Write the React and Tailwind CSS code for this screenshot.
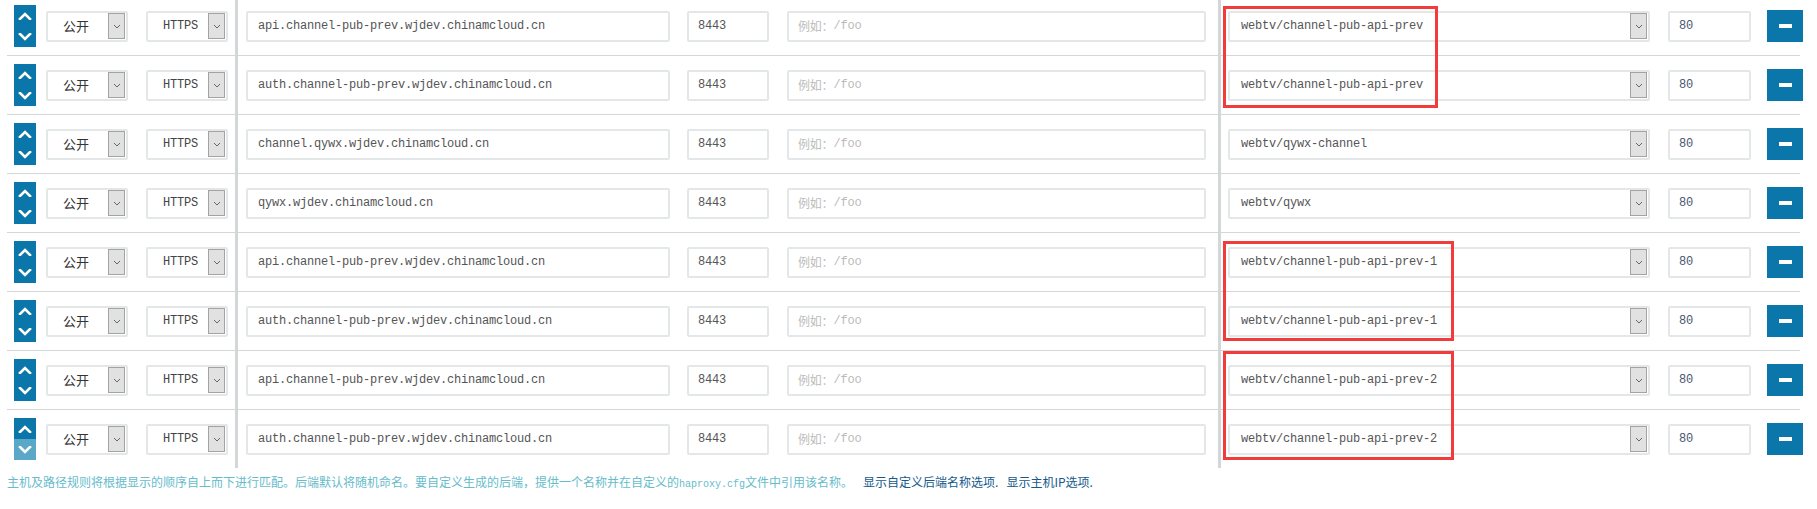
const rows = [
  { host: 'api.channel-pub-prev.wjdev.chinamcloud.cn', backend: 'webtv/channel-pub-api-prev' },
  { host: 'auth.channel-pub-prev.wjdev.chinamcloud.cn', backend: 'webtv/channel-pub-api-prev' },
  { host: 'channel.qywx.wjdev.chinamcloud.cn', backend: 'webtv/qywx-channel' },
  { host: 'qywx.wjdev.chinamcloud.cn', backend: 'webtv/qywx' },
  { host: 'api.channel-pub-prev.wjdev.chinamcloud.cn', backend: 'webtv/channel-pub-api-prev-1' },
  { host: 'auth.channel-pub-prev.wjdev.chinamcloud.cn', backend: 'webtv/channel-pub-api-prev-1' },
  { host: 'api.channel-pub-prev.wjdev.chinamcloud.cn', backend: 'webtv/channel-pub-api-prev-2' },
  { host: 'auth.channel-pub-prev.wjdev.chinamcloud.cn', backend: 'webtv/channel-pub-api-prev-2' },
]

const mono = "font-[family-name:'Liberation_Mono','Noto_Sans_CJK_SC',monospace] font-normal text-[12px] tracking-[-0.2px]"
const cjk = "font-[family-name:'Noto_Sans_CJK_SC',sans-serif] font-normal"

function Chevron({ up }) {
  return (
    <svg width="14" height="8" viewBox="0 0 14 8">
      <polyline
        points={up ? '2,7 7,2 12,7' : '2,1 7,6 12,1'}
        fill="none"
        stroke="white"
        strokeWidth="2.6"
        strokeLinecap="square"
      />
    </svg>
  )
}

function MoveButton({ last }) {
  return (
    <div className="w-[22px] h-[42px] flex flex-col shrink-0">
      <div className="flex-1 bg-[#0b76a9] flex items-center justify-center">
        <Chevron up />
      </div>
      <div className={`flex-1 flex items-center justify-center ${last ? 'bg-[#5ba7c8]' : 'bg-[#0b76a9]'}`}>
        <Chevron />
      </div>
    </div>
  )
}

function Box({ className = '', children }) {
  return (
    <div className={`h-[31px] shrink-0 border-2 border-[#e4e7e7] rounded-[2px] bg-white flex items-center whitespace-nowrap ${className}`}>
      {children}
    </div>
  )
}

function SelectBox({ className, textClass = '', children }) {
  return (
    <Box className={`pr-[1px] ${className}`}>
      <span className={`flex-1 min-w-0 ${textClass}`}>{children}</span>
      <span className="w-[17px] h-[26px] bg-[#e1e1e1] border border-[#a3a3a3] flex items-center justify-center">
        <svg width="8" height="5" viewBox="0 0 8 5">
          <polyline points="1,1 4,4 7,1" fill="none" stroke="#666" strokeWidth="1" />
        </svg>
      </span>
    </Box>
  )
}

function Divider() {
  return <div className="w-[3px] self-stretch bg-[#d3d7d7] shrink-0 -my-[8px]" />
}

function Row({ row, last }) {
  return (
    <div className={`flex items-center py-[8px] pl-[7px] ${last ? '' : 'border-b border-[#d3d7d7]'}`}>
      <MoveButton last={last} />
      <SelectBox className="ml-[10px] w-[82px]" textClass={`pl-[15px] text-[13px] text-[#333] ${cjk}`}>
        公开
      </SelectBox>
      <SelectBox className="ml-[18px] w-[82px]" textClass={`pl-[15px] text-[#444] ${mono}`}>
        HTTPS
      </SelectBox>
      <div className="ml-[7px] self-stretch flex">
        <Divider />
      </div>
      <Box className={`ml-[8px] w-[424px] pl-[10px] text-[#555] ${mono}`}>{row.host}</Box>
      <Box className={`ml-[17px] w-[82px] pl-[9px] text-[#555] ${mono}`}>8443</Box>
      <Box className={`ml-[18px] w-[419px] pl-[9px] text-[#bbbbbb] ${mono}`}>
        <span className={`${cjk} text-[12px]`}>例如：</span>/foo
      </Box>
      <div className="ml-[12px] self-stretch flex">
        <Divider />
      </div>
      <SelectBox className="ml-[7px] w-[422px]" textClass={`pl-[11px] text-[#555] ${mono}`}>
        {row.backend}
      </SelectBox>
      <Box className={`ml-[18px] w-[83px] pl-[9px] text-[#4a5670] ${mono}`}>80</Box>
      <div className="ml-[16px] w-[36px] h-[32px] bg-[#0b76a9] flex items-center justify-center shrink-0">
        <div className="w-[13px] h-[4px] bg-white" />
      </div>
    </div>
  )
}

function Mark({ className }) {
  return <div className={`absolute border-[3px] border-[#f23c3c] pointer-events-none ${className}`} />
}

export default function App() {
  return (
    <div className="relative w-[1817px] h-[509px] overflow-hidden bg-white">
      <div className="ml-[7px] w-[1793px] -mt-[3px]">
        {rows.map((row, i) => (
          <Row key={i} row={row} last={i === rows.length - 1} />
        ))}
      </div>

      <p className={`mt-[6px] ml-[7px] text-[12px] leading-[16px] whitespace-nowrap text-[#66bccb] ${cjk}`}>
        主机及路径规则将根据显示的顺序自上而下进行匹配。后端默认将随机命名。要自定义生成的后端，提供一个名称并在自定义的
        <span className="font-[family-name:'Liberation_Mono',monospace] text-[10px]">haproxy.cfg</span>
        文件中引用该名称。
        <a className="ml-[10px] text-[#14598a]">显示自定义后端名称选项.</a>
        <a className="ml-[8px] text-[#14598a]">显示主机IP选项.</a>
      </p>

      <Mark className="left-[1223px] top-[6px] w-[215px] h-[102px]" />
      <Mark className="left-[1223px] top-[241px] w-[231px] h-[100px]" />
      <Mark className="left-[1223px] top-[351px] w-[231px] h-[109px]" />
    </div>
  )
}
